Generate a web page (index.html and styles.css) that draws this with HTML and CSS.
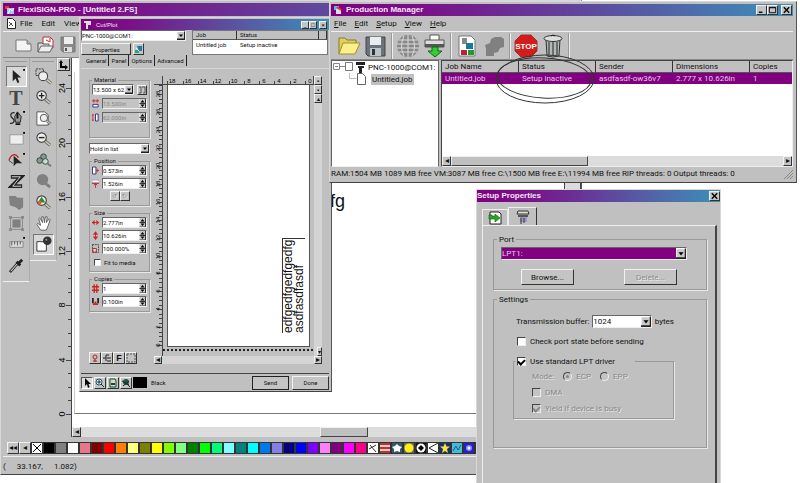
FILE: index.html
```
<!DOCTYPE html>
<html lang="en">
<head>
    <meta charset="UTF-8">
    <meta name="viewport" content="width=device-width, initial-scale=1.0">
    <title>FlexiSIGN-PRO</title>
    <link rel="stylesheet" href="styles.css">
</head>
<body>
    <!-- shared icons -->
    <svg class="defs" width="0" height="0" aria-hidden="true">
        <symbol id="drop" viewBox="0 0 8 8"><path d="M0 0h8v8H0z" fill="#c8c8c8"/><path d="M0 8V0h8" fill="none" stroke="#fff"/><path d="M8 0v8H0" fill="none" stroke="#222" stroke-width="2"/><path d="M2 3h4L4 5.500z"/></symbol>
        <symbol id="spin" viewBox="0 0 6 9"><path d="M0 0h6v9H0z" fill="#c8c8c8"/><path d="M6 0v9H0M0 4.500h6" fill="none" stroke="#333"/><path d="M1 3.500h4L3 1zM1 5.500h4L3 8z"/></symbol>
        <symbol id="lens" viewBox="0 0 18 18"><path d="M11 11l5 4" stroke="#777" stroke-width="3.500"/><path d="M11 11l5 4" stroke="#e6e6b0" stroke-width="1.200"/><circle cx="7" cy="7" r="5" fill="#eee" stroke="#444" stroke-width="1.200"/></symbol>
    </svg>

    <main class="desktop">
        <section class="window flexi">
            <header class="titlebar titlebar-wide">
                <svg class="app-icon" viewBox="0 0 10 10"><path d="M0 1h4v3H0z" fill="#e33"/><path d="M2 3h7v6H2z" fill="#9cf"/><path d="M3 9l2-5 2 2 2-3" stroke="#fff" fill="none"/></svg>
                <h1>FlexiSIGN-PRO - [Untitled 2.FS]</h1>
            </header>
            <nav class="menu flexi-menu">
                <svg viewBox="0 0 9 11"><path d="M.5.5h5l3 3v7h-8z" fill="#fff" stroke="#222"/><path d="M2 4l4 4M2 8l3-3" stroke="#555"/></svg>
                <a href="#">File</a>
                <a href="#">Edit</a>
                <a href="#">View</a>
            </nav>
            <div class="toolbar flexi-toolbar">
                <button aria-label="New"><svg viewBox="0 0 18 18"><path d="M1 4h11l4 4v7H1z" fill="#f4f4f4" stroke="#777"/><path d="M12 4v4h4" fill="#bbb" stroke="#777"/></svg></button>
                <button aria-label="Open"><svg viewBox="0 0 18 18"><path d="M6 1h7l3 3v8H6z" fill="#fff" stroke="#b33"/><path d="M9 4l4 2M13 2v4" stroke="#c22"/><path d="M1 16V7h4l1 1h6v3" fill="#ddd" stroke="#555"/><path d="M1 16l3-6h12l-3 6z" fill="#eee" stroke="#666"/></svg></button>
                <button aria-label="Save"><svg viewBox="0 0 18 18"><path d="M2 1h14v15H4l-2-2z" fill="#888" stroke="#777"/><path d="M5 1h9v7H5z" fill="#eee"/><path d="M5 11h8v5H5z" fill="#ddd"/><path d="M6 12h2v3H6z" fill="#555"/></svg></button>
            </div>
            <div class="workspace">
                <div class="toolbox">
                    <button class="pressed" aria-label="Select"><svg viewBox="0 0 18 18"><path d="M5 2v12l3-3 2 5 2-1-2-5h4z" fill="#222"/><path d="M16 1h2v2h-2z"/></svg></button>
                    <button class="text-tool">T</button>
                    <button aria-label="Pen"><svg viewBox="0 0 18 18"><path d="M7 3C2 2 2 7 5 9s1 6-3 5" fill="none" stroke="#222" stroke-width="1.300"/><path d="M10 2l4 5-1 6h-5L7 7z" fill="#999" stroke="#222"/><path d="M10 3v6M8 15h5" stroke="#111" stroke-width="2"/><path d="M16 1h2v2h-2z"/></svg></button>
                    <button aria-label="Rectangle"><svg viewBox="0 0 18 18"><path d="M2 4h14v10H2z" fill="#eee" stroke="#999"/><path d="M16 1h2v2h-2z"/></svg></button>
                    <button aria-label="Edit path"><svg viewBox="0 0 18 18"><path d="M1 9c2-7 7-8 10-3" fill="none" stroke="#b22" stroke-width="1.300"/><path d="M6 4v11l3-3h6z" fill="#222"/><path d="M1 9l4 3" stroke="#444"/><path d="M16 1h2v2h-2z"/></svg></button>
                    <button aria-label="Measure"><svg viewBox="0 0 18 18"><path d="M3 4h11L4 14h11" fill="none" stroke="#222" stroke-width="4"/><path d="M4 4h9L5 14h9" fill="none" stroke="#ddd"/></svg></button>
                    <button aria-label="Weld"><svg viewBox="0 0 18 18"><path d="M1 2h7l2 2h6v10l-4 3-4-3-6-2z" fill="#808080"/></svg></button>
                    <button aria-label="Frame"><svg viewBox="0 0 18 18"><path d="M4 4h10v10H4z" fill="#808080" stroke="#eee"/><path d="M3 3h12v12H3z" fill="none" stroke="#777"/><path d="M1 1h3v3H1zM14 14h3v3h-3zM14 1h3v3h-3zM1 14h3v3H1z" fill="#888"/></svg></button>
                    <button aria-label="Ruler"><svg viewBox="0 0 18 18"><path d="M2 6h14v6H2z" fill="#ddd" stroke="#888"/><path d="M4 6v4M7 6v3M10 6v4M13 6v3" stroke="#555"/><path d="M16 1h2v2h-2z"/></svg></button>
                    <button aria-label="Eyedropper"><svg viewBox="0 0 18 18"><path d="M2 16l8-9" stroke="#333" stroke-width="3"/><path d="M3 15l7-8" stroke="#eee"/><path d="M9 5l4 4M11 7l4-4" stroke="#222" stroke-width="3"/></svg></button>
                </div>
                <div class="toolbox">
                    <button aria-label="Zoom area"><svg viewBox="0 0 18 18"><path d="M1 1h8v7H1z" fill="none" stroke="#333" stroke-dasharray="2 1"/><use href="#lens" x="2" y="2" width="17" height="17"/></svg></button>
                    <button aria-label="Zoom in"><svg viewBox="0 0 18 18"><use href="#lens" width="18" height="18"/><path d="M4 7h6M7 4v6" stroke="#222" stroke-width="1.500"/></svg></button>
                    <button aria-label="Zoom page"><svg viewBox="0 0 18 18"><path d="M2 2h8l4 3v11H2z" fill="#fff" stroke="#555"/><use href="#lens" x="4" y="3" width="14" height="14"/></svg></button>
                    <button aria-label="Zoom out"><svg viewBox="0 0 18 18"><use href="#lens" width="18" height="18"/><path d="M4 7h6" stroke="#222" stroke-width="1.500"/></svg></button>
                    <button aria-label="Zoom objects"><svg viewBox="0 0 18 18"><circle cx="9" cy="5" r="3" fill="#8a9a8a" stroke="#344"/><circle cx="5" cy="9" r="3" fill="#8a9a8a" stroke="#344"/><circle cx="11" cy="10" r="3" fill="#cdc" stroke="#344"/><path d="M13 12l4 3" stroke="#777" stroke-width="2"/></svg></button>
                    <button aria-label="Zoom previous"><svg viewBox="0 0 18 18"><circle cx="8" cy="7" r="6" fill="#808080"/><path d="M11 11l5 4" stroke="#808080" stroke-width="3"/></svg></button>
                    <button aria-label="Zoom colour"><svg viewBox="0 0 18 18"><use href="#lens" width="18" height="18"/><path d="M3 9l4-6 4 6z" fill="#2a8a2a"/><circle cx="5" cy="9" r="2" fill="#d62"/></svg></button>
                    <button aria-label="Pan"><svg viewBox="0 0 18 18"><path d="M6 16l-4-6 1-1 3 2L4 4l1-1 3 5-1-6h2l1 6 1-6h2l-1 6 3-4 1 1-2 6-2 5z" fill="#fff" stroke="#444" stroke-width=".8"/></svg></button>
                    <button class="pressed" aria-label="Fill and stroke"><svg viewBox="0 0 18 18"><path d="M2 6h10v10H2z" fill="#fff" stroke="#333"/><circle cx="13" cy="5" r="4.500" fill="#333"/><circle cx="12" cy="4" r="1" fill="#999"/></svg></button>
                </div>
                <div class="ruler-column">
                    <button class="raised origin" aria-label="Ruler origin"><svg viewBox="0 0 10 10"><path d="M3 2v5h5" fill="none" stroke="#000" stroke-width="2"/><path d="M1 3l2-3 2 3zM7 5l3 2-3 3z"/></svg></button>
                    <svg id="main-ruler" class="main-ruler"></svg>
                </div>
                <div class="canvas">
                    <div class="canvas-row">
                        <div class="paper"><span class="artwork">fg</span></div>
                        <div class="v-track"></div>
                    </div>
                    <div class="scrollbar main-scroll">
                        <button class="raised" aria-label="Scroll left">◂</button>
                        <div class="thumb"></div>
                    </div>
                </div>
            </div>
            <div class="palette" id="palette">
                <button class="raised" aria-label="First">◂◂</button>
                <button class="raised" aria-label="Previous">◂</button>
            </div>
            <footer class="coords"><span>(</span><span>33.167,</span><span>1.082)</span></footer>
        </section>

        <section class="window cutplot">
            <header class="titlebar">
                <svg class="app-icon" viewBox="0 0 10 10"><path d="M1 2h7M3 4h5M4 4v5" stroke="#ddd" stroke-width="2"/></svg>
                <h2>Cut/Plot</h2>
                <button class="raised" aria-label="Minimize">_</button>
                <button class="raised" aria-label="Maximize">□</button>
                <button class="raised" aria-label="Close">×</button>
            </header>
            <div class="device">
                <div class="device-pick">
                    <span class="combo"><select aria-label="Device"><option>PNC-1000@COM1:</option></select><svg><use href="#drop"/></svg></span>
                    <div class="device-buttons">
                        <button class="raised">Properties</button>
                        <button class="raised" aria-label="Connection"><svg viewBox="0 0 9 9"><path d="M1 5h4v3H1z" fill="#2a7"/><path d="M3 1h5v5H5z" fill="#27a"/><path d="M2 3l3 3" stroke="#fff"/></svg></button>
                    </div>
                </div>
                <table class="jobs">
                    <thead><tr><th>Job</th><th>Status</th><th></th></tr></thead>
                    <tbody><tr><td>Untitled job</td><td>Setup inactive</td><td></td></tr></tbody>
                </table>
            </div>
            <div class="tabs">
                <button>General</button><button>Panel</button><button>Options</button><button>Advanced</button>
            </div>
            <div class="cut-body">
                <form class="settings">
                    <fieldset class="material">
                        <legend>Material</legend>
                        <div class="field">
                            <span class="combo"><select aria-label="Material size"><option>13.500 x 62.00</option></select><svg><use href="#drop"/></svg></span>
                            <button type="button" class="raised" aria-label="Read size"><svg viewBox="0 0 8 8"><path d="M1 1h2v6H1M4 1h3v6H5" fill="none" stroke="#555"/></svg></button>
                        </div>
                        <div class="field"><svg viewBox="0 0 8 10"><path d="M0 2h8M2 0v4M6 0v4" stroke="#c22"/><path d="M1 6h6v3H1z" fill="#fff" stroke="#227"/></svg><span class="spin"><input aria-label="Width" value="13.500in" disabled><svg><use href="#spin"/></svg></span></div>
                        <div class="field"><svg viewBox="0 0 8 10"><path d="M1 1v8M0 2h2M0 8h2" stroke="#c22"/><path d="M4 1h3v8H4z" fill="#fff" stroke="#227"/></svg><span class="spin"><input aria-label="Height" value="62.000in" disabled><svg><use href="#spin"/></svg></span></div>
                    </fieldset>
                    <span class="combo hold"><select aria-label="Hold"><option>Hold in list</option></select><svg><use href="#drop"/></svg></span>
                    <fieldset>
                        <legend>Position</legend>
                        <div class="field"><svg viewBox="0 0 8 10"><path d="M.5 1h4v8h-4z" fill="#fff" stroke="#227"/><path d="M5 5h3M6 3v4" stroke="#c22"/></svg><span class="spin"><input aria-label="X" value="0.573in"><svg><use href="#spin"/></svg></span></div>
                        <div class="field"><svg viewBox="0 0 8 10"><path d="M0 1h8v3H0z" fill="#fff" stroke="#99c"/><path d="M0 5h8M4 5v5M2 7l2-2 2 2" stroke="#c22" fill="none"/></svg><span class="spin"><input aria-label="Y" value="1.526in"><svg><use href="#spin"/></svg></span></div>
                        <div class="pair">
                            <button type="button" class="raised" disabled aria-label="Rotate left">↺</button>
                            <button type="button" class="raised" disabled aria-label="Rotate right">↻</button>
                        </div>
                    </fieldset>
                    <fieldset>
                        <legend>Size</legend>
                        <div class="field"><svg viewBox="0 0 8 10"><path d="M0 5h8" stroke="#c22"/><path d="M3 2v6L0 5zM5 2v6l3-3z" fill="#c22"/></svg><span class="spin"><input aria-label="Width" value="2.777in"><svg><use href="#spin"/></svg></span></div>
                        <div class="field"><svg viewBox="0 0 8 10"><path d="M4 1v8" stroke="#c22"/><path d="M1 4h6L4 0zM1 6h6l-3 4z" fill="#c22"/></svg><span class="spin"><input aria-label="Height" value="10.626in"><svg><use href="#spin"/></svg></span></div>
                        <div class="field"><svg viewBox="0 0 8 10"><path d="M.5.5h7v9h-7z" fill="none" stroke="#333" stroke-dasharray="2 1"/><path d="M1 5h4v4H1z" fill="#ddd" stroke="#a22"/></svg><span class="spin"><input aria-label="Scale" value="100.000%"><svg><use href="#spin"/></svg></span></div>
                        <label class="check"><input type="checkbox">Fit to media</label>
                    </fieldset>
                    <fieldset>
                        <legend>Copies</legend>
                        <div class="field"><svg viewBox="0 0 8 10"><path d="M0 3h8M0 7h8M2.500 0v10M5.500 0v10" stroke="#c22" stroke-width="1.500"/></svg><span class="spin"><input aria-label="Copies" value="1"><svg><use href="#spin"/></svg></span></div>
                        <div class="field"><svg viewBox="0 0 8 10"><path d="M1 1v6M7 1v6" stroke="#222" stroke-width="2"/><path d="M1 8h6M4 5v4" stroke="#c22" stroke-width="2"/></svg><span class="spin"><input aria-label="Spacing" value="0.100in"><svg><use href="#spin"/></svg></span></div>
                    </fieldset>
                    <div class="modes">
                        <button type="button" class="raised" aria-label="Weed"><svg viewBox="0 0 10 10"><circle cx="5" cy="4" r="2" fill="none" stroke="#b22"/><path d="M5 6v3M3 8h4" stroke="#b22"/></svg></button>
                        <button type="button" class="raised" aria-label="Overlap"><svg viewBox="0 0 10 10"><path d="M1 5h3M4 2v6M4 2h3M5 5h4M5 8h4" stroke="#222" fill="none"/></svg></button>
                        <button type="button" class="raised letter">F</button>
                        <button type="button" class="raised" aria-label="Tiles"><svg viewBox="0 0 10 10"><path d="M1 1h8v8H1z" fill="none" stroke="#555" stroke-dasharray="2 1"/></svg></button>
                    </div>
                </form>
                <div class="preview">
                    <div class="corner"></div>
                    <svg id="top-ruler" class="top-ruler"></svg>
                    <svg id="side-ruler" class="side-ruler"></svg>
                    <div class="sheet">
                        <div class="media">
                            <p class="plot">edfgedfgedfgedfg<br>asdfasdfasdf</p>
                        </div>
                    </div>
                    <div class="preview-v">
                        <button class="raised" aria-label="Zoom in">▪</button>
                        <button class="raised" aria-label="Zoom out">▪</button>
                        <button class="raised" aria-label="Up">▴</button>
                        <button class="raised end" aria-label="Down">▾</button>
                    </div>
                    <div class="scrollbar preview-h">
                        <button class="raised" aria-label="Left">◂</button>
                        <button class="raised" aria-label="Right">▸</button>
                    </div>
                </div>
            </div>
            <footer class="cut-footer">
                <button class="raised pressed" aria-label="Pick"><svg viewBox="0 0 10 10"><path d="M3 0v8l2-2 1 4 1.500-1L6.500 6H9z"/></svg></button>
                <button class="raised" aria-label="Zoom"><svg viewBox="0 0 10 10"><circle cx="4" cy="4" r="3" fill="#fff" stroke="#156"/><path d="M2 4h4M4 2v4M6 6l3 3" stroke="#033"/></svg></button>
                <button class="raised" aria-label="Page"><svg viewBox="0 0 10 10"><path d="M2 1h5l1 2v6H2z" fill="#cdc" stroke="#243"/><path d="M3 6h4" stroke="#243" stroke-width="2"/></svg></button>
                <button class="raised" aria-label="Fit"><svg viewBox="0 0 10 10"><circle cx="5" cy="4" r="3" fill="#254"/><path d="M2 8l6-5M6 6l3 3M1 3l7 4" stroke="#132"/></svg></button>
                <i class="ink"></i><span>Black</span>
                <button class="raised action send">Send</button>
                <button class="raised action">Done</button>
            </footer>
        </section>

        <section class="window manager">
            <header class="titlebar">
                <svg class="app-icon" viewBox="0 0 10 10"><path d="M1 1h5v4H1z" fill="#5bd"/><path d="M3 4h5v5H3z" fill="#dde"/><path d="M4 2l4 3" stroke="#e33" stroke-width="2"/></svg>
                <h2>Production Manager</h2>
                <button class="raised" aria-label="Minimize"><svg viewBox="0 0 10 8"><path d="M2 6.500h4" stroke="#000" stroke-width="1.500"/></svg></button>
                <button class="raised" aria-label="Maximize"><svg viewBox="0 0 10 8"><path d="M1.500 1h7v6h-7zM1.500 1.500h7" fill="none" stroke="#000"/></svg></button>
                <button class="raised close" aria-label="Close"><svg viewBox="0 0 10 8"><path d="M2 1l6 6M8 1L2 7" stroke="#000" stroke-width="1.500"/></svg></button>
            </header>
            <nav class="menu">
                <a href="#"><u>F</u>ile</a>
                <a href="#"><u>E</u>dit</a>
                <a href="#"><u>S</u>etup</a>
                <a href="#"><u>V</u>iew</a>
                <a href="#"><u>H</u>elp</a>
            </nav>
            <div class="toolbar manager-toolbar">
                <button aria-label="Open"><svg viewBox="0 0 24 24"><path d="M2 20V4h6l2 2h9v4" fill="#e0d060" stroke="#887a20"/><path d="M2 20l4-11h17l-5 11z" fill="#fbf08a" stroke="#a09030"/></svg></button>
                <button aria-label="Save"><svg viewBox="0 0 24 24"><path d="M2 3h19v19H4l-2-2z" fill="#69737a" stroke="#444"/><path d="M6 3h11v8H6z" fill="#e8eef0"/><path d="M6 14h11v8H6z" fill="#bcc4c8"/><path d="M8 15h3v6H8z" fill="#333"/></svg></button>
                <hr>
                <button aria-label="Network"><svg viewBox="0 0 24 24"><circle cx="12" cy="12" r="11" fill="#888"/><path d="M3 6h18M1 10h22M1 14h22M3 18h18M12 1v22M8 2q-5 10 0 20M16 2q5 10 0 20" stroke="#ddd" fill="none"/></svg></button>
                <button aria-label="Print"><svg viewBox="0 0 24 24"><path d="M7 1h9v6H7z" fill="#fff" stroke="#555"/><path d="M2 6h19v7H2z" fill="#ddd" stroke="#555"/><path d="M2 10h19v3H2z" fill="#555"/><path d="M9 13h6v4h4l-7 6-7-6h4z" fill="#3c3" stroke="#161"/></svg></button>
                <hr>
                <button aria-label="Job preview"><svg viewBox="0 0 24 24"><path d="M4 2h12l4 4v16H4z" fill="#fff" stroke="#777"/><path d="M7 4h5v6H7z" fill="#888"/><path d="M11 9h7v6h-7z" fill="#167a9a"/><path d="M6 16h6v5H6z" fill="#b23"/><path d="M13 16h6v5h-6z" fill="#293"/></svg></button>
                <button aria-label="Nest"><svg viewBox="0 0 24 24"><path d="M9 5l4-2h6l3 2v8l-4 1-2 4-4 1v3H4v-7l-1-4 5-2z" fill="#808080"/></svg></button>
                <hr>
                <button aria-label="Stop"><svg viewBox="0 0 24 24"><path d="M7 1h10l6 6v10l-6 6H7l-6-6V7z" fill="#d41c1c" stroke="#933"/><text x="12" y="15" class="stop-text">STOP</text></svg></button>
                <button aria-label="Delete"><svg viewBox="0 0 24 24"><path d="M5 5h14l-1 17q-6 2-12 0z" fill="#b4b8ba" stroke="#333"/><path d="M8 8v13M12 8v14M16 8v13" stroke="#555" stroke-width="1.500"/><ellipse cx="12" cy="4.500" rx="9" ry="3" fill="#ddd" stroke="#333"/><path d="M10 2q2-2 4 0" stroke="#222" fill="none"/></svg></button>
                <hr>
            </div>
            <div class="manager-body">
                <div class="tree">
                    <div class="node"><svg class="branch" viewBox="0 0 36 12"><path d="M1.500 2.500h6v6h-6zM3 5.500h3M8 5.500h5" fill="none" stroke="#888"/><path d="M13.500 1.500h7v8h-7z" fill="#fff" stroke="#777"/><path d="M24 1h9v3h-9zM26 5h6v2h-6zM27 7h3v5h-3z" fill="#222"/></svg><span>PNC-1000@COM1:</span></div>
                    <div class="node"><svg class="branch" viewBox="0 0 36 12"><path d="M17.500 0v5.500h7" fill="none" stroke="#bbb"/><path d="M25.500.5h5l3 3v8h-8z" fill="#fff" stroke="#666"/></svg><span class="selected">Untitled.job</span></div>
                </div>
                <div class="queue">
                    <table>
                        <thead><tr><th>Job Name</th><th>Status</th><th>Sender</th><th>Dimensions</th><th>Copies</th></tr></thead>
                        <tbody><tr><td>Untitled.job</td><td>Setup inactive</td><td>asdfasdf-ow36v7</td><td>2.777 x 10.626in</td><td>1</td></tr></tbody>
                    </table>
                    <div class="scrollbar">
                        <button class="raised" aria-label="Scroll left">◂</button>
                        <div class="thumb"></div>
                        <button class="raised end" aria-label="Scroll right">▸</button>
                    </div>
                    <svg class="scribble" viewBox="0 0 102 52"><ellipse cx="51" cy="26" rx="49" ry="24" /><ellipse cx="50" cy="25" rx="47" ry="20" transform="rotate(3 50 24)"/></svg>
                </div>
            </div>
            <footer class="manager-status">
                <span>RAM:1504 MB 1089 MB free VM:3087 MB free C:\1500 MB free E:\11994 MB free RIP threads: 0 Output threads: 0</span>
                <svg viewBox="0 0 10 10"><path d="M1 10l9-9M4 10l6-6M7 10l3-3" stroke="#888"/></svg>
            </footer>
        </section>

        <section class="window setup">
            <header class="titlebar">
                <h2>Setup Properties</h2>
                <button class="raised" aria-label="Close"><svg viewBox="0 0 10 8"><path d="M2 1l6 6M8 1L2 7" stroke="#000" stroke-width="1.500"/></svg></button>
            </header>
            <div class="page-tabs">
                <button aria-label="General"><svg viewBox="0 0 14 14"><path d="M2 1h9l2 2v10H2z" fill="#fff" stroke="#222"/><path d="M1 4v4h6v3l5-4-5-4v2H4V4z" fill="#2a2" stroke="#151" stroke-width=".6"/></svg></button>
                <button class="current" aria-label="Port"><svg viewBox="0 0 14 14"><path d="M2 1h10l1 3H1z" fill="#ddc" stroke="#333"/><path d="M2 5h10v2H2z" fill="#555"/><path d="M4 7h7v5H4z" fill="#99b"/><path d="M5 8v6M8 8v5" stroke="#334"/></svg></button>
            </div>
            <form class="page">
                <fieldset class="port">
                    <legend>Port</legend>
                    <span class="combo chosen"><select aria-label="Port"><option>LPT1:</option></select><svg><use href="#drop"/></svg></span>
                    <div class="port-buttons">
                        <button type="button" class="raised">Browse...</button>
                        <button type="button" class="raised" disabled>Delete...</button>
                    </div>
                </fieldset>
                <fieldset class="port-settings">
                    <legend>Settings</legend>
                    <div class="buffer">
                        <label for="buffer">Transmission buffer:</label>
                        <span class="combo"><select id="buffer"><option>1024</option></select><svg><use href="#drop"/></svg></span>
                        <span>bytes</span>
                    </div>
                    <label class="check"><input type="checkbox">Check port state before sending</label>
                    <fieldset class="driver">
                        <legend><label class="check"><input type="checkbox" checked>Use standard LPT driver</label></legend>
                        <div class="mode">
                            <span>Mode:</span>
                            <label class="check"><input type="radio" name="mode" checked disabled>ECP</label>
                            <label class="check"><input type="radio" name="mode" disabled>EPP</label>
                        </div>
                        <label class="check off"><input type="checkbox" disabled>DMA</label>
                        <label class="check off"><input type="checkbox" checked disabled>Yield if device is busy</label>
                    </fieldset>
                </fieldset>
            </form>
        </section>
    </main>
    <script src="script.js"></script>
</body>
</html>
```
FILE: styles.css
```
* {
    margin: 0;
    padding: 0;
    box-sizing: border-box;
    border-radius: 0;
}

body {
    background: #fff;
    color: #111;
    font: 8px/11px Roboto, "Liberation Sans", sans-serif;
}

button, input, select {
    font: inherit;
    color: inherit;
    border: 0;
    background: none;
}

a {
    color: inherit;
    text-decoration: none;
}

svg {
    display: block;
    flex: none;
}

.defs {
    position: absolute;
}

.desktop {
    position: relative;
    min-height: 100vh;
    overflow: hidden;
}

.window {
    position: absolute;
    display: flex;
    flex-direction: column;
    background: #c0c0c0;
    border: 1px solid #d8d8d8;
    border-right-color: #555;
    border-bottom-color: #444;
}

.raised {
    background: #c4c4c4;
    border: 1px solid #f2f2f2;
    border-right-color: #333;
    border-bottom-color: #333;
    text-align: center;
    overflow: hidden;
}

.raised:disabled {
    color: #888;
    text-shadow: 1px 1px #eee;
}

.titlebar {
    display: flex;
    align-items: center;
    height: 12px;
    background: linear-gradient(to right, #800080, #7a1088 20%, #3c90b8);
    color: #f0e8f4;
}

.titlebar h1, .titlebar h2 {
    flex: 1;
    font: bold 8px/12px "Liberation Sans", sans-serif;
    white-space: nowrap;
}

.titlebar button {
    width: 11px;
    height: 10px;
    color: #000;
}

.titlebar button svg {
    width: 9px;
    height: 8px;
}

.app-icon {
    width: 10px;
    height: 10px;
    margin: 0 3px 0 2px;
}

.menu {
    display: flex;
    align-items: center;
    height: 15px;
}

.toolbar {
    display: flex;
    align-items: center;
    border-top: 1px solid #f0f0f0;
    border-bottom: 1px solid #888;
}

.toolbar hr {
    width: 2px;
    height: 26px;
    border: 0;
    border-left: 1px solid #999;
    border-right: 1px solid #eee;
}

.scrollbar {
    display: flex;
    height: 10px;
    background: #dcdcdc;
}

.scrollbar button {
    width: 9px;
    font-size: 8px;
    line-height: 8px;
}

.thumb {
    background: #c0c0c0;
    border: 1px solid #eee;
    border-right-color: #444;
    border-bottom-color: #444;
}

/* form parts */
.combo, .spin {
    display: flex;
    min-width: 0;
    height: 11px;
    background: #fff;
    border: 1px solid #666;
    border-right-color: #eee;
    border-bottom-color: #eee;
}

.combo select, .spin input {
    flex: 1;
    min-width: 0;
    appearance: none;
    overflow: hidden;
}

.combo svg {
    width: 8px;
    height: 100%;
}

.spin svg {
    width: 7px;
    height: 100%;
}

.spin input:disabled {
    background: #c4c4c4;
    color: #888;
}

fieldset {
    min-width: 0;
    border: 1px solid #999;
    box-shadow: 1px 1px #e8e8e8;
}

legend {
    padding: 0 2px;
}

.check {
    display: flex;
    align-items: center;
    gap: 4px;
}

.check input {
    appearance: none;
    display: grid;
    place-items: center;
    width: 9px;
    height: 9px;
    background: #fff;
    border: 1px solid #444;
    border-right-color: #eee;
    border-bottom-color: #eee;
}

.check input:checked::after {
    content: "";
    width: 5px;
    height: 3px;
    border: solid #000;
    border-width: 0 0 2px 2px;
    transform: rotate(-45deg);
}

.check input[type="radio"] {
    border-radius: 50%;
}

.check input[type="radio"]:checked::after {
    width: 3px;
    height: 3px;
    border: 0;
    border-radius: 50%;
    background: #888;
}

.check input:disabled {
    background: #c4c4c4;
}

.check input:disabled:checked::after {
    border-color: #888;
}

/* FlexiSIGN main window */
.flexi {
    left: 0;
    top: 0;
    bottom: 8px;
    width: 582px;
    padding: 2px 0 0 2px;
}

.titlebar-wide {
    height: 13px;
}

.flexi-menu {
    gap: 9px;
    padding-left: 4px;
}

.flexi-menu svg {
    width: 9px;
    height: 11px;
    margin-right: -5px;
}

.flexi-toolbar {
    height: 27px;
    gap: 4px;
    padding-left: 12px;
}

.flexi-toolbar svg {
    width: 18px;
    height: 18px;
}

.workspace {
    flex: 1;
    display: flex;
    align-items: flex-start;
    min-height: 0;
}

.toolbox {
    display: flex;
    flex-direction: column;
    align-items: center;
    width: 27px;
    padding: 8px 0 5px;
    border-right: 1px solid #aaa;
    border-bottom: 1px solid #eee;
    background: linear-gradient(#999, #999) center 3px / 22px 1px no-repeat;
}

.toolbox button {
    width: 21px;
    height: 21px;
}

.toolbox svg {
    width: 17px;
    height: 17px;
    margin: auto;
}

.toolbox .pressed {
    background: #d8d8d8;
    border: 1px solid #777;
    border-right-color: #fff;
    border-bottom-color: #fff;
}

.toolbox .text-tool {
    font: bold 20px/20px "Liberation Serif", serif;
    color: #444;
}

.ruler-column {
    align-self: stretch;
    display: flex;
    flex-direction: column;
    width: 15px;
    border-right: 1px solid #444;
}

.origin {
    width: 13px;
    height: 13px;
}

.origin svg {
    width: 10px;
    height: 10px;
}

.main-ruler {
    width: 15px;
    flex: 1;
    min-height: 0;
}

.canvas {
    align-self: stretch;
    flex: 1;
    display: flex;
    flex-direction: column;
}

.canvas-row {
    flex: 1;
    display: flex;
    background: #fff;
}

.paper {
    position: relative;
    flex: 1;
    margin: 14px 0 13px 2px;
    border-left: 1px solid #ccc;
    border-bottom: 1px solid #777;
}

.artwork {
    position: absolute;
    left: 255px;
    top: 119px;
    font: 18px/20px "Liberation Sans", sans-serif;
}

.v-track {
    width: 17px;
    background: #dcdcdc;
    border: solid #444;
    border-width: 0 1px;
}

.main-scroll .thumb {
    width: 48px;
    margin-left: 239px;
}

.palette {
    display: flex;
    height: 19px;
    padding: 5px 0 2px 4px;
    overflow: hidden;
}

.palette button {
    flex: none;
    width: 12px;
    height: 12px;
    font-size: 8px;
    line-height: 10px;
}

.palette .swatch {
    border: 1px solid #333;
}

.swatch svg {
    width: 10px;
    height: 10px;
}

.coords {
    display: flex;
    gap: 11px;
    height: 18px;
    border-top: 1px solid #eee;
    line-height: 20px;
}

/* Cut/Plot window */
.cutplot {
    left: 79px;
    top: 17px;
    width: 253px;
    font-size: 6px;
    line-height: 9px;
    padding: 1px 2px 0 1px;
}

.cutplot .titlebar {
    height: 11px;
}

.cutplot .titlebar h2 {
    font-size: 6px;
    font-weight: normal;
}

.cutplot .titlebar button {
    width: 8px;
    height: 8px;
    line-height: 5px;
}

.cutplot .titlebar button:last-child {
    margin: 0 2px;
}

.device {
    display: flex;
    gap: 6px;
    padding-right: 1px;
}

.device-pick {
    width: 105px;
}

.device-buttons {
    display: flex;
    gap: 2px;
    margin-top: 2px;
}

.device-buttons button {
    width: 50px;
    height: 12px;
    line-height: 9px;
}

.device-buttons button + button {
    width: 11px;
}

.jobs {
    flex: 1;
    height: 25px;
    background: #fff;
    border: 1px solid #777;
    border-collapse: separate;
    border-spacing: 0;
    table-layout: fixed;
}

th, td {
    text-align: left;
    font-weight: normal;
    vertical-align: top;
    white-space: nowrap;
    padding-left: 3px;
}

th {
    background: #c0c0c0;
    border-right: 1px solid #333;
    border-bottom: 1px solid #555;
}

.jobs th {
    height: 9px;
    line-height: 8px;
}

.jobs th:nth-child(1) {
    width: 44px;
}

.jobs th:nth-child(3) {
    width: 8px;
}

.tabs {
    display: flex;
    height: 13px;
    padding-left: 3px;
}

.tabs button {
    height: 11px;
    padding: 0 2px;
    border-right: 1px solid #222;
}

.cut-body {
    display: flex;
    gap: 4px;
    padding: 7px 7px 9px 8px;
    border-top: 1px solid #d8d8d8;
}

.settings {
    display: flex;
    flex-direction: column;
    width: 61px;
}

.settings fieldset {
    display: flex;
    flex-direction: column;
    gap: 2px;
    padding: 0 2px 4px;
    margin-bottom: 3px;
}

.settings legend {
    line-height: 8px;
}

.settings .material {
    gap: 3px;
    padding-bottom: 14px;
    margin-bottom: 5px;
}

.settings .hold {
    margin-bottom: 3px;
}

.field {
    display: flex;
    align-items: center;
    gap: 3px;
}

.field > svg {
    width: 7px;
    height: 9px;
}

.field .combo, .field .spin {
    flex: 1;
}

.field button {
    width: 10px;
    height: 10px;
}

.field button svg {
    width: 8px;
    height: 8px;
}

.pair {
    display: flex;
    justify-content: center;
}

.pair button {
    width: 10px;
    height: 10px;
    line-height: 8px;
}

.settings .check {
    gap: 3px;
    padding: 2px 2px 0;
}

.settings .check input {
    width: 7px;
    height: 7px;
}

.modes {
    display: flex;
    margin-top: auto;
}

.modes button {
    width: 12px;
    height: 12px;
}

.modes svg {
    width: 10px;
    height: 10px;
}

.modes .letter {
    font: bold 9px/10px "Liberation Sans", sans-serif;
}

.preview {
    flex: 1;
    display: grid;
    grid-template-columns: 9px 1fr 8px;
    grid-template-rows: 9px 271px 8px;
}

.corner, .side-ruler, .top-ruler {
    border: solid #444;
    border-width: 0 1px 1px 0;
}

.top-ruler {
    grid-column: 2;
    width: 100%;
    height: 9px;
    overflow: visible;
}

.side-ruler {
    width: 9px;
    height: 100%;
    border-bottom: 0;
}

.ruler-label {
    font: 6px "Liberation Sans", sans-serif;
    text-anchor: middle;
}

.main-ruler .ruler-label {
    font-size: 9px;
}

.sheet {
    padding: 0 4px 6px;
    background: linear-gradient(to right, #222 50%, transparent 50%) 4px 264px / 4px 2px repeat-x;
}

.media {
    display: flex;
    justify-content: flex-end;
    align-items: flex-end;
    height: 262px;
    padding: 0 4px 13px 0;
    background: #fff;
    border: 1px solid #555;
    border-top: 0;
}

.plot {
    writing-mode: vertical-rl;
    transform: rotate(180deg);
    height: 95px;
    border: solid #333;
    border-width: 0 1px 1px 0;
    font: 12px/11px "Liberation Sans", sans-serif;
    white-space: nowrap;
}

.preview-v {
    grid-row: 1 / 3;
    grid-column: 3;
    display: flex;
    flex-direction: column;
    background: #d4d4d4;
}

.preview-v button {
    height: 9px;
    line-height: 7px;
}

.preview-v .end {
    margin-top: auto;
}

.preview-h {
    grid-column: 1 / 4;
    height: 8px;
    justify-content: space-between;
    background: #d4d4d4;
}

.preview-h button {
    width: 8px;
    line-height: 6px;
}

.cut-footer {
    display: flex;
    align-items: center;
    gap: 1px;
    height: 18px;
    border-top: 1px solid #444;
}

.cut-footer button {
    width: 12px;
    height: 12px;
}

.cut-footer svg {
    width: 10px;
    height: 10px;
}

.cut-footer .pressed {
    background: #ddd;
    border-color: #555 #fff #fff #555;
}

.ink {
    width: 14px;
    height: 11px;
    background: #000;
    margin-right: 3px;
}

.cut-footer .action {
    width: 37px;
    height: 14px;
    margin-left: 2px;
}

.cut-footer .send {
    margin-left: auto;
    border-color: #222;
}

/* Production Manager */
.manager {
    left: 329px;
    right: 3px;
    top: 1px;
    padding: 2px 3px 2px 1px;
}

.manager .close {
    margin: 0 1px 0 3px;
}

.manager .menu {
    gap: 8px;
    padding-left: 3px;
}

.manager-toolbar {
    height: 29px;
    gap: 3px;
    padding-left: 6px;
}

.manager-toolbar svg {
    width: 24px;
    height: 24px;
}

.stop-text {
    font: bold 8px "Liberation Sans", sans-serif;
    fill: #fff;
    text-anchor: middle;
}

.manager-body {
    display: flex;
    gap: 2px;
    height: 107px;
}

.tree {
    width: 108px;
    background: #fff;
    border: 1px solid #666;
    border-bottom-color: #eee;
    white-space: nowrap;
}

.node {
    display: flex;
    align-items: center;
    height: 12px;
}

.branch {
    width: 36px;
    height: 12px;
}

.selected {
    background: #c0c0c0;
    padding: 0 1px;
    margin-left: 3px;
}

.queue {
    position: relative;
    flex: 1;
    display: flex;
    flex-direction: column;
    justify-content: space-between;
    background: #fff;
    border: 1px solid #444;
    border-right-color: #eee;
    border-bottom-color: #eee;
}

.queue table {
    width: 100%;
    table-layout: fixed;
    border-collapse: separate;
    border-spacing: 0;
}

.queue th {
    width: 22%;
    height: 12px;
}

.queue th:last-child {
    width: 12%;
    border-right: 0;
}

.queue td {
    height: 11px;
    background: #800080;
    color: #e8c8e8;
}

.queue .thumb {
    width: 137px;
}

.end {
    margin-left: auto;
}

.scribble {
    position: absolute;
    left: 52px;
    top: -8px;
    width: 102px;
    height: 52px;
    fill: none;
    stroke: #333;
    pointer-events: none;
}

.manager-status {
    display: flex;
    align-items: center;
    justify-content: space-between;
    height: 13px;
    white-space: nowrap;
}

.manager-status svg {
    width: 10px;
    height: 10px;
}

/* Setup Properties */
.setup {
    left: 476px;
    top: 189px;
    bottom: -8px;
    width: 245px;
    border-right-color: #d8d8d8;
}

.page-tabs {
    display: flex;
    align-items: flex-end;
    height: 23px;
    padding-left: 5px;
}

.page-tabs button {
    width: 26px;
    height: 16px;
    border: 1px solid #eee;
    border-bottom: 0;
}

.page-tabs .current {
    width: 29px;
    height: 18px;
    border-right-color: #333;
}

.page-tabs svg {
    width: 14px;
    height: 14px;
    margin: auto;
}

.page {
    flex: 1;
    margin: 0 3px 0 5px;
    padding: 8px 8px 0 10px;
    border: solid #eee;
    border-width: 1px 2px 0 1px;
    border-right-color: #444;
}

.port {
    padding: 2px 19px 4px 7px;
}

.port legend {
    margin-left: -4px;
}

.page .combo {
    height: 13px;
}

.page .combo svg {
    width: 10px;
}

.chosen select {
    background: #800080;
    color: #e8c8e8;
}

.port-buttons {
    display: flex;
    justify-content: space-between;
    padding: 9px 10px 0 20px;
}

.port-buttons button {
    width: 53px;
    height: 16px;
}

.port-settings {
    margin-top: 4px;
    padding: 10px 32px 28px 19px;
}

.port-settings > legend {
    margin-left: -16px;
}

.port-settings > .check {
    margin: 8px 0 9px 4px;
}

.buffer {
    display: flex;
    align-items: center;
    gap: 3px;
    padding-left: 3px;
    white-space: nowrap;
}

.buffer .combo {
    width: 60px;
}

.driver {
    display: flex;
    flex-direction: column;
    gap: 5px;
    padding: 4px 0 4px 18px;
    color: #888;
    text-shadow: 1px 1px #e4e4e4;
}

.driver legend {
    margin-left: -17px;
    padding: 0 20px 0 2px;
    color: #111;
    text-shadow: none;
}

.mode {
    display: flex;
    align-items: center;
    gap: 9px;
}
```
FILE: script.js
```
const NS = 'http://www.w3.org/2000/svg';

function add(parent, name, attrs, text) {
    const el = document.createElementNS(NS, name);
    for (const key in attrs) el.setAttribute(key, attrs[key]);
    if (text !== undefined) el.textContent = text;
    parent.appendChild(el);
    return el;
}

// vertical ruler: labels run bottom to top from `zero`
function sideRuler(id, width, baseline, zero, step, labels, each) {
    const svg = document.getElementById(id);
    let d = '';
    for (let i = 0; zero - i * step / 4 > 0; i++) {
        const y = Math.round(zero - i * step / 4);
        const len = i % 4 === 0 ? 5 : 3;
        d += `M${width - len} ${y}.5h${len}`;
    }
    add(svg, 'path', { d, stroke: '#444', fill: 'none' });
    for (let i = 0; i < labels; i++) {
        const y = Math.round(zero - i * step);
        add(svg, 'text', { class: 'ruler-label', transform: `translate(${baseline} ${y}) rotate(-90)` }, i * each);
    }
}

sideRuler('main-ruler', 14, 8, 343, 54.3, 7, 4);
sideRuler('side-ruler', 8, 6, 260, 17.9, 15, 2);

const topRuler = document.getElementById('top-ruler');
for (let i = 0; i < 10; i++) {
    const x = Math.round(147 - i * 15.3);
    add(topRuler, 'text', { class: 'ruler-label', x, y: 7 }, i * 2);
    add(topRuler, 'path', { d: `M${x - 5}.5 5v4`, stroke: '#444' });
}

const colours = ['#000', '#808080', '#fff', '#e87888', '#800000', '#f00', '#ff8000', '#ffff80',
    '#808000', '#ff0', '#80ff00', '#80ff80', '#008000', '#0f0', '#00ff80', '#80ffff', '#008080',
    '#0ff', '#0078f0', '#8080e8', '#000080', '#00f', '#8000ff', '#ff80ff', '#800080', '#f0f', '#f08'];

// X (no fill) first, pattern fills last
const none = '<path d="M0 0h10v10H0z" fill="#fff"/><path d="M1 1l8 8M9 1L1 9" stroke="#000"/>';
const patterns = [
    '<path d="M0 0h10v10H0z" fill="#fff"/><path d="M2 2l6 7M1 6l7-4" stroke="#333"/>',
    '<path d="M0 0h10v10H0z" fill="#b33"/><path d="M0 3h10M0 7h10" stroke="#fff" stroke-width="1.500"/>',
    '<path d="M0 0h10v10H0z" fill="#357"/><path d="M5 1l2 2 3 1-2 2v3L5 8 2 9V6L0 4l3-1z" fill="#fff"/>',
    '<path d="M0 0h10v10H0z" fill="#666"/><circle cx="5" cy="5" r="4.500" fill="#fe1"/>',
    '<path d="M0 0h10v10H0z" fill="#111"/><circle cx="5" cy="5" r="4.500" fill="#fff"/><path d="M5 2l3 3-3 3-3-3z"/>',
    '<path d="M0 0h10v10H0z" fill="#fff"/><path d="M10 0L1 5l9 5" fill="none" stroke="#222"/>',
    '<path d="M0 0h10v10H0z" fill="#136"/><path d="M5 0l1.500 3.500H10L7 6l1 4-3-2-3 2 1-4-3-2.500h3.500z" fill="#fd4"/>',
    '<path d="M0 0h10v10H0z" fill="#4bd"/><path d="M1 8l3-5 2 4 3-5" fill="none" stroke="#168"/>',
    '<path d="M0 0h10v10H0z" fill="#22c"/><circle cx="5" cy="5" r="3" fill="#88f"/><circle cx="5" cy="5" r="1.500" fill="#fff"/>',
    '<path d="M0 0h10v10H0z" fill="#fff"/>'
];

const palette = document.getElementById('palette');
function swatch(colour, art) {
    const b = document.createElement('button');
    b.className = 'swatch';
    b.setAttribute('aria-label', colour || 'Pattern');
    if (colour) b.style.background = colour;
    if (art) b.innerHTML = `<svg viewBox="0 0 10 10">${art}</svg>`;
    palette.appendChild(b);
}
swatch('', none);
colours.forEach(c => swatch(c));
patterns.forEach(p => swatch('', p));
```
